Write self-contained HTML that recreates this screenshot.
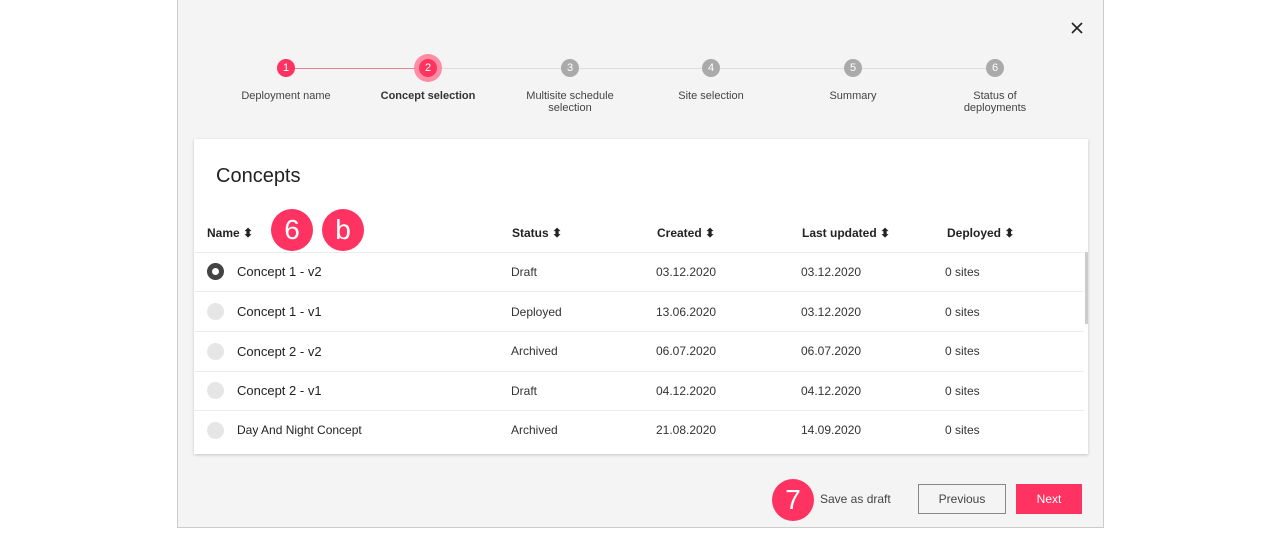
<!DOCTYPE html><html><head><style>
body{margin:0;width:1280px;height:554px;background:#fff;font-family:"Liberation Sans",sans-serif;position:relative;overflow:hidden;color:#333}
.abs{position:absolute}
.modal{left:177px;top:0;width:925px;height:527px;background:#f4f4f4;border:1px solid #ccc;border-top:none}
.c{width:18px;height:18px;border-radius:50%;color:#fff;font-size:11px;text-align:center;line-height:18px}
.lbl{font-size:11px;text-align:center;width:130px;color:#444;line-height:12px}
.card{left:194px;top:139px;width:894px;height:315px;background:#fff;box-shadow:0 1px 3px rgba(0,0,0,.2)}
.th{font-size:12px;font-weight:bold;color:#222;top:226px}
.td{font-size:12px;color:#333}
.nm{font-size:13px;color:#222}
.sep{left:194px;width:890px;height:1px;background:#ececec}
.rad{width:17px;height:17px;border-radius:50%;background:#e6e6e6;left:207px}
.badge{width:42px;height:42px;border-radius:50%;background:#ff3361;color:#fff;font-size:28px;text-align:center;line-height:42px}
</style></head><body>
<div class="abs modal"></div>
<svg class="abs" style="left:1071px;top:22px" width="12" height="12" viewBox="0 0 12 12"><path d="M1 1L11 11M11 1L1 11" stroke="#222" stroke-width="1.6"/></svg>
<div class="abs" style="left:286px;top:68px;width:142px;height:1px;background:#e8838f"></div>
<div class="abs" style="left:428px;top:68px;width:567px;height:1px;background:#ddd"></div>
<div class="abs" style="left:414px;top:54px;width:28px;height:28px;border-radius:50%;background:#ff8ca3"></div>
<div class="abs c" style="left:277px;top:59px;background:#ff3361">1</div>
<div class="abs c" style="left:419px;top:59px;background:#ff3361">2</div>
<div class="abs c" style="left:561px;top:59px;background:#aaa">3</div>
<div class="abs c" style="left:702px;top:59px;background:#aaa">4</div>
<div class="abs c" style="left:844px;top:59px;background:#aaa">5</div>
<div class="abs c" style="left:986px;top:59px;background:#aaa">6</div>
<div class="abs lbl" style="left:221px;top:90px">Deployment name</div>
<div class="abs lbl" style="left:363px;top:90px;font-weight:bold;color:#333">Concept selection</div>
<div class="abs lbl" style="left:505px;top:90px">Multisite schedule selection</div>
<div class="abs lbl" style="left:646px;top:90px">Site selection</div>
<div class="abs lbl" style="left:788px;top:90px">Summary</div>
<div class="abs lbl" style="left:930px;top:90px;width:130px">Status of<br>deployments</div>
<div class="abs card"></div>
<div class="abs" style="left:216px;top:165px;font-size:20px;color:#222">Concepts</div>
<div class="abs th" style="left:207px">Name ⬍</div>
<div class="abs th" style="left:512px">Status ⬍</div>
<div class="abs th" style="left:657px">Created ⬍</div>
<div class="abs th" style="left:802px">Last updated ⬍</div>
<div class="abs th" style="left:947px">Deployed ⬍</div>
<div class="abs sep" style="top:252px"></div><div class="abs sep" style="top:291px"></div><div class="abs sep" style="top:331px"></div><div class="abs sep" style="top:371px"></div><div class="abs sep" style="top:410px"></div>
<div class="abs" style="left:1085px;top:252px;width:3px;height:72px;background:#ccc"></div>
<div class="abs rad" style="top:263px;background:#444;box-sizing:border-box;border:5px solid #444"><div style="width:7px;height:7px;background:#fff;border-radius:50%"></div></div>
<div class="abs rad" style="top:303px"></div><div class="abs rad" style="top:343px"></div><div class="abs rad" style="top:382px"></div><div class="abs rad" style="top:422px"></div>
<div class="abs nm" style="left:237px;top:264px">Concept 1 - v2</div>
<div class="abs nm" style="left:237px;top:304px">Concept 1 - v1</div>
<div class="abs nm" style="left:237px;top:344px">Concept 2 - v2</div>
<div class="abs nm" style="left:237px;top:383px">Concept 2 - v1</div>
<div class="abs nm" style="left:237px;top:423px;font-size:12px">Day And Night Concept</div>
<div class="abs td" style="left:511px;top:265px">Draft</div><div class="abs td" style="left:656px;top:265px">03.12.2020</div><div class="abs td" style="left:801px;top:265px">03.12.2020</div><div class="abs td" style="left:945px;top:265px">0 sites</div>
<div class="abs td" style="left:511px;top:305px">Deployed</div><div class="abs td" style="left:656px;top:305px">13.06.2020</div><div class="abs td" style="left:801px;top:305px">03.12.2020</div><div class="abs td" style="left:945px;top:305px">0 sites</div>
<div class="abs td" style="left:511px;top:344px">Archived</div><div class="abs td" style="left:656px;top:344px">06.07.2020</div><div class="abs td" style="left:801px;top:344px">06.07.2020</div><div class="abs td" style="left:945px;top:344px">0 sites</div>
<div class="abs td" style="left:511px;top:384px">Draft</div><div class="abs td" style="left:656px;top:384px">04.12.2020</div><div class="abs td" style="left:801px;top:384px">04.12.2020</div><div class="abs td" style="left:945px;top:384px">0 sites</div>
<div class="abs td" style="left:511px;top:423px">Archived</div><div class="abs td" style="left:656px;top:423px">21.08.2020</div><div class="abs td" style="left:801px;top:423px">14.09.2020</div><div class="abs td" style="left:945px;top:423px">0 sites</div>
<div class="abs badge" style="left:271px;top:209px">6</div>
<div class="abs badge" style="left:322px;top:209px">b</div>
<div class="abs badge" style="left:772px;top:479px">7</div>
<div class="abs" style="left:820px;top:492px;font-size:12px;color:#444">Save as draft</div>
<div class="abs" style="left:918px;top:484px;width:86px;height:28px;border:1px solid #888;font-size:12px;text-align:center;line-height:28px;color:#444">Previous</div>
<div class="abs" style="left:1016px;top:484px;width:66px;height:30px;background:#ff3361;color:#fff;font-size:12px;text-align:center;line-height:30px">Next</div>
</body></html>
